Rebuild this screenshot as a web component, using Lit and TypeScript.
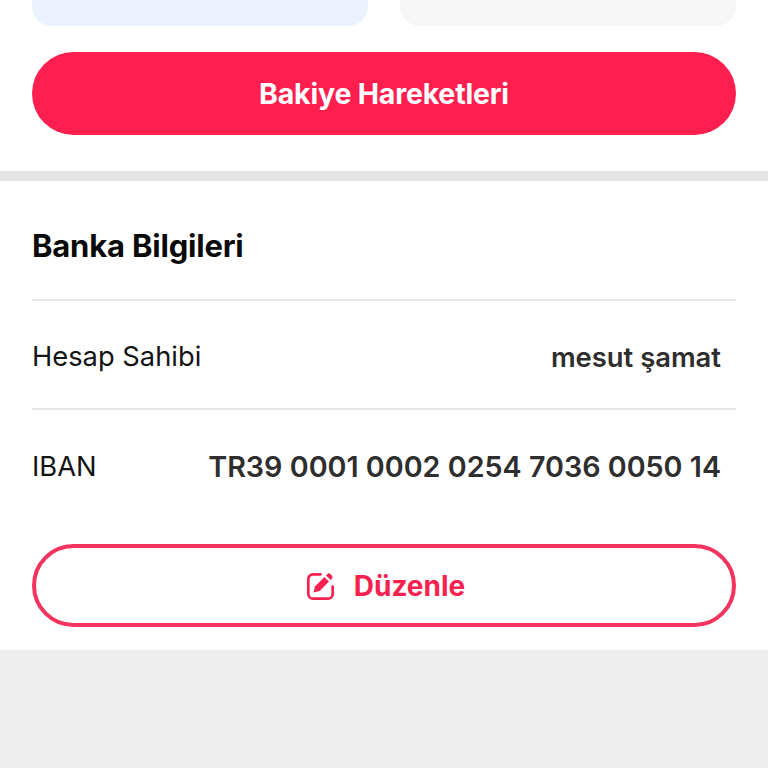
import { LitElement, html, css } from "lit";
import { customElement } from "lit/decorators.js";

@customElement("app-root")
export class AppRoot extends LitElement {
  static styles = css`
    :host { display: block; width: 768px; height: 768px; background: #eeeeee; font-family: Inter, "Liberation Sans", sans-serif; overflow: hidden; }
    .top { background: #fff; padding: 0 32px 36px; display: flex; flex-direction: column; gap: 26px; }
    .cards { display: grid; grid-template-columns: 336px 336px; gap: 32px; }
    .card { height: 26px; border-radius: 0 0 20px 20px; }
    .blue { background: #ebf2fe; }
    .grey { background: #f6f6f6; }
    .primary { height: 83px; border-radius: 42px; background: #ff1f4f; color: #fff; display: flex; align-items: center; justify-content: center; font-size: 28.5px; font-weight: 700; letter-spacing: -0.2px; }
    .rule { height: 10px; background: #e5e5e5; }
    .bank { background: #fff; padding: 0 32px; height: 469px; box-sizing: border-box; display: flex; flex-direction: column; }
    h2 { margin: 0; height: 120px; box-sizing: border-box; padding-top: 47px; font-size: 31px; line-height: 36px; font-weight: 700; color: #0a0a0a; border-bottom: 2px solid #e8e8e8; letter-spacing: -0.2px; }
    .row { height: 109px; box-sizing: border-box; display: flex; align-items: center; justify-content: space-between; padding: 4px 15px 0 0; font-size: 27.3px; color: #141414; border-bottom: 2px solid #e8e8e8; }
    .row.last { border-bottom: 0; height: 114px; padding-top: 0; padding-bottom: 2px; }
    .row b { font-weight: 600; color: #2e2e2e; font-size: 28.7px; }
    .row b.name { font-size: 27.4px; }
    .outline { margin-top: 20px; padding-left: 2px; height: 83px; box-sizing: border-box; border: 4px solid #f5335f; border-radius: 42px; display: flex; align-items: center; justify-content: center; gap: 19px; color: #f5224f; font-size: 28px; font-weight: 700; }
    svg { width: 30px; height: 30px; display: block; }
  `;

  render() {
    return html`
      <div class="top">
        <div class="cards"><div class="card blue"></div><div class="card grey"></div></div>
        <div class="primary">Bakiye Hareketleri</div>
      </div>
      <div class="rule"></div>
      <div class="bank">
        <h2>Banka Bilgileri</h2>
        <div class="row"><span>Hesap Sahibi</span><b class="name">mesut şamat</b></div>
        <div class="row last"><span>IBAN</span><b>TR39 0001 0002 0254 7036 0050 14</b></div>
        <div class="outline">
          <svg viewBox="0 0 30 30" fill="none">
            <path d="M15.5 3.3H8a4.7 4.7 0 0 0-4.7 4.7v15a4.7 4.7 0 0 0 4.7 4.7h15a4.7 4.7 0 0 0 4.7-4.7v-7.5" stroke="#f5224f" stroke-width="2.7" stroke-linecap="round"/>
            <path d="M8.5 21.5l1.6-6.3L19.4 6l4.6 4.6-9.3 9.3z" fill="#f5224f"/>
            <path d="M21 4.4l1.2-1.2a2.4 2.4 0 0 1 3.4 0l1.2 1.2a2.4 2.4 0 0 1 0 3.4L25.6 9z" fill="#f5224f"/>
          </svg>
          <span>Düzenle</span>
        </div>
      </div>
    `;
  }
}
